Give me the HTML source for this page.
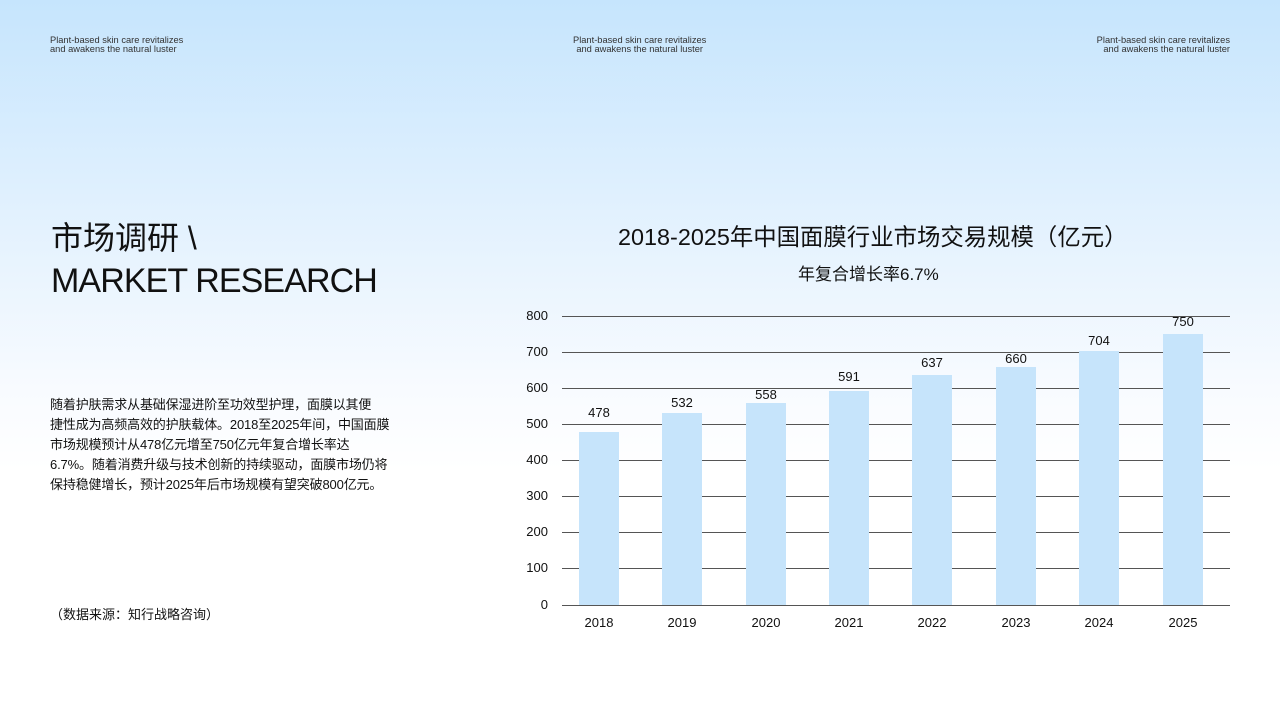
<!DOCTYPE html>
<html><head><meta charset="utf-8"><style>
*{margin:0;padding:0;box-sizing:border-box}
body{width:1280px;height:720px;overflow:hidden;position:relative;font-family:"Liberation Sans","Noto Sans CJK SC",sans-serif;color:#111;background:linear-gradient(to bottom,#c6e5fd 0px,#e4f2fe 230px,#f8fbff 390px,#fff 470px,#fff 720px)}
.a{position:absolute;white-space:nowrap}
.tag{font-size:9.3px;line-height:9px;color:#333}
.gl{position:absolute;left:562px;width:668px;height:1px;background:#555}
.bar{position:absolute;width:40px;background:#c6e4fb}
.yl{position:absolute;left:516px;width:32px;text-align:right;font-size:13px;line-height:14px}
.xl{position:absolute;width:60px;text-align:center;font-size:13px;top:615px}
.vl{position:absolute;width:60px;text-align:center;font-size:13px;line-height:16px}
</style></head><body>
<div class="a tag" style="left:50px;top:36px">Plant-based skin care revitalizes<br>and awakens the natural luster</div>
<div class="a tag" style="left:573px;top:36px;text-align:center">Plant-based skin care revitalizes<br>and awakens the natural luster</div>
<div class="a tag" style="right:50px;top:36px;text-align:right">Plant-based skin care revitalizes<br>and awakens the natural luster</div>
<div class="a" style="left:51px;top:218px;font-size:32px;line-height:40px">市场调研 \</div>
<div class="a" style="left:51px;top:261px;font-size:34px;line-height:40px;letter-spacing:-0.9px">MARKET RESEARCH</div>
<div class="a" style="left:50px;top:395px;font-size:13px;line-height:20px;letter-spacing:-0.15px">随着护肤需求从基础保湿进阶至功效型护理，面膜以其便<br>捷性成为高频高效的护肤载体。2018至2025年间，中国面膜<br>市场规模预计从478亿元增至750亿元年复合增长率达<br>6.7%。随着消费升级与技术创新的持续驱动，面膜市场仍将<br>保持稳健增长，预计2025年后市场规模有望突破800亿元。</div>
<div class="a" style="left:50px;top:604px;font-size:13px">（数据来源：知行战略咨询）</div>
<div class="a" style="left:618px;top:218px;font-size:23.4px">2018-2025年中国面膜行业市场交易规模（亿元）</div>
<div class="a" style="left:798px;top:260px;font-size:17px">年复合增长率6.7%</div>
<div class="gl" style="top:316px"></div><div class="gl" style="top:352px"></div><div class="gl" style="top:388px"></div><div class="gl" style="top:424px"></div><div class="gl" style="top:460px"></div><div class="gl" style="top:496px"></div><div class="gl" style="top:532px"></div><div class="gl" style="top:568px"></div><div class="gl" style="top:605px"></div>
<div class="yl" style="top:309px">800</div><div class="yl" style="top:345px">700</div><div class="yl" style="top:381px">600</div><div class="yl" style="top:417px">500</div><div class="yl" style="top:453px">400</div><div class="yl" style="top:489px">300</div><div class="yl" style="top:525px">200</div><div class="yl" style="top:561px">100</div><div class="yl" style="top:598px">0</div>
<div class="bar" style="left:579px;top:432px;height:173px"></div>
<div class="bar" style="left:662px;top:413px;height:192px"></div>
<div class="bar" style="left:746px;top:403px;height:202px"></div>
<div class="bar" style="left:829px;top:391px;height:214px"></div>
<div class="bar" style="left:912px;top:375px;height:230px"></div>
<div class="bar" style="left:996px;top:367px;height:238px"></div>
<div class="bar" style="left:1079px;top:351px;height:254px"></div>
<div class="bar" style="left:1163px;top:334px;height:271px"></div>
<div class="vl" style="left:569px;top:405px">478</div>
<div class="vl" style="left:652px;top:395px">532</div>
<div class="vl" style="left:736px;top:387px">558</div>
<div class="vl" style="left:819px;top:369px">591</div>
<div class="vl" style="left:902px;top:355px">637</div>
<div class="vl" style="left:986px;top:351px">660</div>
<div class="vl" style="left:1069px;top:333px">704</div>
<div class="vl" style="left:1153px;top:314px">750</div>
<div class="xl" style="left:569px">2018</div><div class="xl" style="left:652px">2019</div><div class="xl" style="left:736px">2020</div><div class="xl" style="left:819px">2021</div><div class="xl" style="left:902px">2022</div><div class="xl" style="left:986px">2023</div><div class="xl" style="left:1069px">2024</div><div class="xl" style="left:1153px">2025</div>
</body></html>
